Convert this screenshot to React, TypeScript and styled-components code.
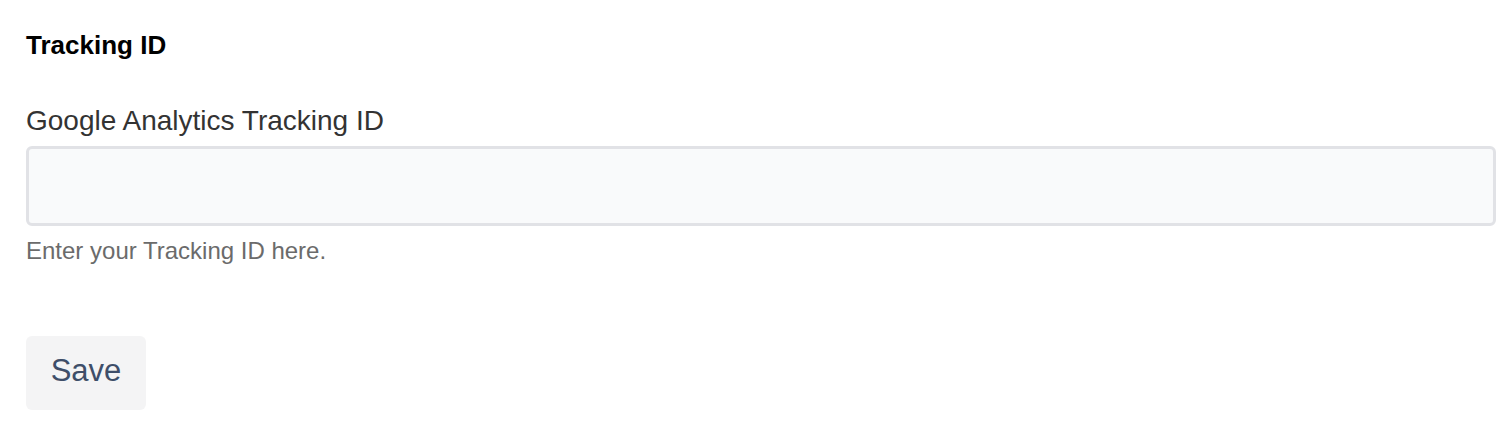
import { FunctionComponent } from 'react'
import styled, { createGlobalStyle } from 'styled-components'

const GlobalStyle = createGlobalStyle`
  html, body {
    margin: 0;
    padding: 0;
    background: #ffffff;
    font-family: "Liberation Sans", Arial, Helvetica, sans-serif;
  }
`

const Page = styled.div`
  display: flex;
  flex-direction: column;
  padding: 30px 10px 0 26px;
`

const SectionTitle = styled.h2`
  margin: 0;
  font-size: 26px;
  line-height: 30px;
  font-weight: 700;
  color: #000;
`

const Field = styled.div`
  display: flex;
  flex-direction: column;
  margin-top: 45px;
`

const Label = styled.label`
  font-size: 28px;
  line-height: 32px;
  color: #333333;
  margin-bottom: 9px;
`

const TextInput = styled.input`
  box-sizing: border-box;
  width: 100%;
  height: 80px;
  border: 3px solid #e1e2e6;
  border-radius: 6px;
  background: #f9fafb;
  padding: 0 20px;
  font-family: inherit;
  font-size: 28px;
  color: #333;
  outline: none;
`

const HelpText = styled.p`
  margin: 11px 0 0;
  font-size: 24px;
  line-height: 28px;
  color: #6b6b6b;
`

const Actions = styled.div`
  display: flex;
  margin-top: 71px;
`

const Button = styled.button`
  display: flex;
  align-items: center;
  justify-content: center;
  width: 120px;
  height: 74px;
  padding: 0 0 4px;
  border: none;
  border-radius: 6px;
  background: #f4f4f5;
  font-family: inherit;
  font-size: 31px;
  color: #3e4e69;
  cursor: pointer;
`

const TrackingSettings: FunctionComponent = () => (
  <Page>
    <SectionTitle>Tracking ID</SectionTitle>
    <Field>
      <Label htmlFor="ga-id">Google Analytics Tracking ID</Label>
      <TextInput id="ga-id" type="text" />
      <HelpText>Enter your Tracking ID here.</HelpText>
    </Field>
    <Actions>
      <Button type="button">Save</Button>
    </Actions>
  </Page>
)

export default function App() {
  return (
    <>
      <GlobalStyle />
      <TrackingSettings />
    </>
  )
}
